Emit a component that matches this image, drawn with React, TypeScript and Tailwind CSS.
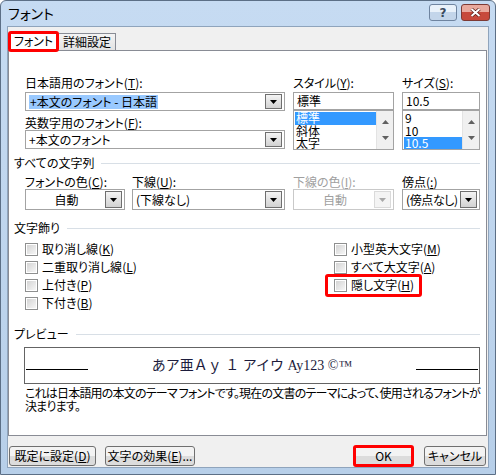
import type { ReactNode } from "react";

// Win7 "フォント" dialog (Word) — font tab

const UI = "font-['Noto_Sans_CJK_JP',sans-serif] [font-feature-settings:'palt'] text-[12px] text-black";

function Key({ k }: { k: string }) {
  return (
    <>
      (<span className="underline underline-offset-1">{k}</span>)
    </>
  );
}

function DropArrow({ disabled }: { disabled?: boolean }) {
  return (
    <span
      className={`flex h-full w-[17px] shrink-0 items-center justify-center border ${
        disabled
          ? "border-[#dadada] bg-[#f4f4f4]"
          : "border-[#6f6f6f] bg-gradient-to-b from-[#f4f4f4] to-[#d2d2d2]"
      }`}
    >
      <svg width="7" height="4" viewBox="0 0 7 4">
        <path d="M0 0h7L3.5 4z" fill={disabled ? "#a8a8a8" : "#000"} />
      </svg>
    </span>
  );
}

function Combo({
  className,
  children,
  center,
  disabled,
  selected,
}: {
  className: string;
  children: ReactNode;
  center?: boolean;
  disabled?: boolean;
  selected?: boolean;
}) {
  return (
    <div
      className={`flex items-stretch border bg-white px-[2px] py-[1px] ${
        disabled ? "border-[#c9c9c9]" : "border-[#a3a3a3]"
      } ${className}`}
    >
      <span
        className={`flex min-w-0 flex-1 items-center whitespace-nowrap ${
          center ? "justify-center" : "pl-[1px]"
        } ${disabled ? "text-[#a0a0a0]" : ""}`}
      >
        <span className={`leading-[14px] ${selected ? "bg-[#99c9ff] px-[1px]" : ""}`}>{children}</span>
      </span>
      <DropArrow disabled={disabled} />
    </div>
  );
}

function ScrollBar() {
  return (
    <div className="flex w-[17px] shrink-0 flex-col items-center justify-between border-l border-[#e3e3e3] bg-[#f0f0f0] py-[9px]">
      <svg width="7" height="4" viewBox="0 0 7 4">
        <path d="M0 4h7L3.5 0z" fill="#606060" />
      </svg>
      <svg width="7" height="4" viewBox="0 0 7 4">
        <path d="M0 0h7L3.5 4z" fill="#606060" />
      </svg>
    </div>
  );
}

function ListBox({ items, sel }: { items: string[]; sel: number }) {
  return (
    <div className="flex h-[40px] overflow-hidden border border-[#a3a3a3] bg-white">
      <div className="flex flex-1 flex-col pt-[1px] pl-[1px]">
        {items.map((it, i) => (
          <div
            key={it}
            className={`h-[12.5px] pl-[1px] leading-[12.5px] ${i === sel ? "bg-[#3399ff] text-white" : ""}`}
          >
            {it}
          </div>
        ))}
      </div>
      <ScrollBar />
    </div>
  );
}

function Header({ children }: { children: ReactNode }) {
  return (
    <div className="flex h-[14px] items-center gap-[7px] pr-[6px] pl-[5px]">
      <span className="leading-[14px]">{children}</span>
      <span className="h-px flex-1 bg-[#d8dfe6]" />
    </div>
  );
}

function Check({ children }: { children: ReactNode }) {
  return (
    <div className="flex h-[18px] items-center gap-[4px]">
      <span className="h-[13px] w-[13px] border border-[#8e8f8f] bg-white p-[1px]">
        <span className="block h-full w-full bg-gradient-to-br from-[#d4d4d4] to-[#f6f6f6]" />
      </span>
      <span className="leading-[14px]">{children}</span>
    </div>
  );
}

function Btn({ className, children }: { className: string; children: ReactNode }) {
  return (
    <div
      className={`flex items-center justify-center rounded-[3px] bg-gradient-to-b from-[#f3f3f3] from-50% to-[#dcdcdc] to-50% ${className}`}
    >
      {children}
    </div>
  );
}

export default function App() {
  return (
    <div className={`h-[475px] w-[496px] bg-white ${UI}`}>
      <div className="flex h-full w-full flex-col rounded-t-[6px] border border-[#5c6f86] bg-gradient-to-b from-[#c6dbf2] to-[#b7cfe9]">
        {/* title bar */}
        <div className="flex h-[25px] shrink-0 items-start">
          <span className="mt-[4px] ml-[7px] text-[14px] leading-[16px]">フォント</span>
          <div className="ml-auto mr-[5px] mt-[3px] flex gap-[4px]">
            <span className="flex h-[17px] w-[28px] items-center justify-center rounded-[3px] border border-[#6f84a0] bg-gradient-to-b from-[#e9f1fa] from-50% to-[#c3d5ea] to-50% font-['DejaVu_Sans',sans-serif] text-[12px] font-bold leading-none text-[#3a4a5e]">
              ?
            </span>
            <span className="flex h-[17px] w-[29px] items-center justify-center rounded-[3px] border border-[#7d3a34] bg-gradient-to-b from-[#e9a99d] from-50% to-[#c7493b] to-50%">
              <svg width="11" height="9" viewBox="0 0 11 9">
                <path d="M1.5 1l8 7M9.5 1l-8 7" stroke="#5a1a14" strokeWidth="3.4" />
                <path d="M1.5 1l8 7M9.5 1l-8 7" stroke="#fff" strokeWidth="2" />
              </svg>
            </span>
          </div>
        </div>

        {/* dialog body */}
        <div className="mx-[6px] flex h-[442px] flex-col border border-[#8fa4bc] bg-[#f0f0f0] pr-[1px]">
          {/* tabs */}
          <div className="mt-[4px] flex h-[21px] items-end">
            <div className="relative z-10 flex h-[21px] w-[51px] items-center justify-center rounded-[3px] border-[3px] border-[#ff0000] bg-white pb-[1px]">
              フォント
            </div>
            <div className="mb-[2px] flex h-[17px] w-[57px] items-center justify-center border border-b-0 border-l-0 border-[#898c95] bg-gradient-to-b from-[#f4f4f4] to-[#e2e2e2]">
              詳細設定
            </div>
          </div>

          {/* panel */}
          <div className="-mt-[2px] h-[386px] w-[479px] border border-[#898c95] bg-white">
            {/* font row */}
            <div className="mt-[24px] flex pl-[16px]">
              <div className="flex w-[260px] flex-col">
                <div className="h-[16px] leading-[16px]">
                  日本語用のフォント<Key k="T" />:
                </div>
                <Combo className="mt-[1px] h-[19px]" selected>
                  +本文のフォント - 日本語
                </Combo>
                <div className="mt-[5px] h-[14px] leading-[14px]">
                  英数字用のフォント<Key k="F" />:
                </div>
                <Combo className="h-[19px]">+本文のフォント</Combo>
              </div>
              <div className="ml-[8px] flex w-[101px] flex-col">
                <div className="h-[16px] leading-[16px]">
                  スタイル<Key k="Y" />:
                </div>
                <div className="mt-[1px] flex h-[18px] items-center border border-[#a3a3a3] pl-[3px]">標準</div>
                <ListBox items={["標準", "斜体", "太字"]} sel={0} />
              </div>
              <div className="ml-[8px] flex w-[78px] flex-col">
                <div className="h-[16px] leading-[16px]">
                  サイズ<Key k="S" />:
                </div>
                <div className="mt-[1px] flex h-[18px] items-center border border-[#a3a3a3] pl-[3px]">10.5</div>
                <ListBox items={["9", "10", "10.5"]} sel={2} />
              </div>
            </div>

            <div className="mt-[6px]">
              <Header>すべての文字列</Header>
            </div>

            {/* color / underline row */}
            <div className="mt-[5px] flex pl-[16px]">
              <div className="flex w-[100px] flex-col">
                <div className="h-[14px] leading-[14px]">
                  フォントの色<Key k="C" />:
                </div>
                <Combo className="h-[21px]" center>
                  自動
                </Combo>
              </div>
              <div className="ml-[7px] flex w-[153px] flex-col">
                <div className="h-[14px] leading-[14px]">
                  下線<Key k="U" />:
                </div>
                <Combo className="h-[21px]">(下線なし)</Combo>
              </div>
              <div className="ml-[8px] flex w-[101px] flex-col">
                <div className="h-[14px] leading-[14px] text-[#a0a0a0]">
                  下線の色<Key k="I" />:
                </div>
                <Combo className="h-[21px]" center disabled>
                  自動
                </Combo>
              </div>
              <div className="ml-[8px] flex w-[78px] flex-col">
                <div className="h-[14px] leading-[14px]">
                  傍点<Key k=":" />
                </div>
                <Combo className="h-[21px] tracking-[-0.4px]">(傍点なし)</Combo>
              </div>
            </div>

            <div className="mt-[11px]">
              <Header>文字飾り</Header>
            </div>

            {/* effects */}
            <div className="mt-[5px] flex pl-[16px]">
              <div className="flex w-[309px] flex-col">
                <Check>
                  取り消し線<Key k="K" />
                </Check>
                <Check>
                  二重取り消し線<Key k="L" />
                </Check>
                <Check>
                  上付き<Key k="P" />
                </Check>
                <Check>
                  下付き<Key k="B" />
                </Check>
              </div>
              <div className="flex flex-col">
                <Check>
                  小型英大文字<Key k="M" />
                </Check>
                <Check>
                  すべて大文字<Key k="A" />
                </Check>
                <div className="relative">
                  <Check>
                    隠し文字<Key k="H" />
                  </Check>
                  <span className="absolute -top-[2px] -left-[9px] h-[23px] w-[97px] rounded-[3px] border-[3px] border-[#ff0000]" />
                </div>
              </div>
            </div>

            <div className="mt-[15px]">
              <Header>プレビュー</Header>
            </div>

            {/* preview */}
            <div className="mt-[6px] mr-[6px] ml-[15px] flex h-[37px] items-center border border-[#646464] px-[1px]">
              <span className="mt-[8px] h-px w-[62px] shrink-0 bg-black" />
              <div className="flex flex-1 justify-center whitespace-nowrap font-['Liberation_Serif','Noto_Sans_CJK_JP',serif] text-[14px] [font-feature-settings:normal] text-[#1c1c3c]">
                <span>あア亜Ａｙ １ アイウ Ay123 ©™</span>
              </div>
              <span className="mt-[8px] h-px w-[62px] shrink-0 bg-black" />
            </div>
            <p className="mt-[2px] whitespace-nowrap pl-[16px] leading-[13px] tracking-[-0.8px]">
              これは日本語用の本文のテーマ フォントです。現在の文書のテーマによって、使用されるフォントが
              <br />
              決まります。
            </p>
          </div>

          {/* buttons */}
          <div className="mt-[8px] flex h-[23px] items-center">
            <Btn className="ml-[1px] h-[20px] w-[87px] border border-[#707070]">
              既定に設定<Key k="D" />
            </Btn>
            <Btn className="ml-[9px] h-[20px] w-[90px] border border-[#707070]">
              文字の効果<Key k="E" />...
            </Btn>
            <Btn className="ml-auto h-[22px] w-[61px] border-[3px] border-[#ff0000]">OK</Btn>
            <Btn className="mr-[1px] ml-[10px] h-[20px] w-[62px] border border-[#707070]">キャンセル</Btn>
          </div>
        </div>
      </div>
    </div>
  );
}
